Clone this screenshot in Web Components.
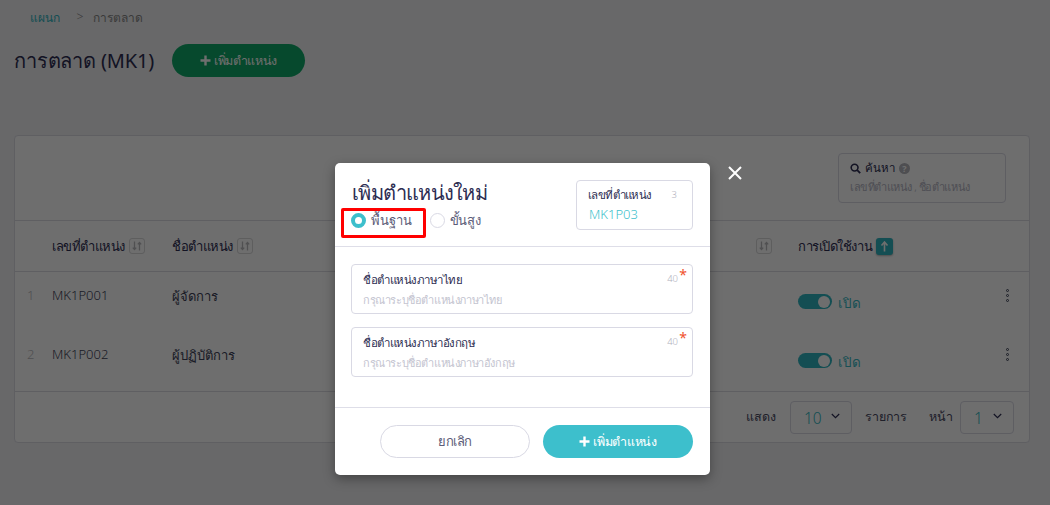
<!DOCTYPE html>
<html lang="th">
<head>
<meta charset="utf-8">
<title>การตลาด</title>
<style>
  html, body { margin: 0; height: 100%; }
  body { width: 1050px; height: 505px; overflow: hidden; background: #f0f0f3; color: #2d2d52; font-family: "Noto Sans", "Open Sans", sans-serif; font-weight: 300; }
</style>
</head>
<body>
<position-page></position-page>

<script>
const SORT_ICON = `<svg width="16" height="16" viewBox="0 0 16 16"><rect x=".5" y=".5" width="15" height="15" rx="2.5" fill="none" stroke="currentColor" opacity=".55"/><path d="M5.5 3.5v8M3.8 9.6l1.7 2 1.7-2M10.5 12.5v-8M8.8 6.4l1.7-2 1.7 2" fill="none" stroke="currentColor" stroke-width="1.3"/></svg>`;
const CHEVRON = `<svg width="9" height="6" viewBox="0 0 9 6"><path d="M.8 1l3.7 3.7L8.2 1" fill="none" stroke="currentColor" stroke-width="1.2"/></svg>`;

class SortTag extends HTMLElement {
  constructor() {
    super();
    this.attachShadow({ mode: 'open' }).innerHTML = `
      <style>
        :host { display: inline-flex; color: #b9b9bd; }
        :host([active]) { color: #fff; }
        .up { width: 17px; height: 17px; border-radius: 3px; background: #2fb5c0; display: flex; align-items: center; justify-content: center; box-shadow: 0 1px 2px rgba(0,0,0,.3); }
      </style>
      ${this.hasAttribute('active')
        ? `<span class="up"><svg width="9" height="11" viewBox="0 0 9 11"><path d="M4.5 10.5V2M1.5 4.5l3-3.5 3 3.5" fill="none" stroke="currentColor" stroke-width="1.6"/></svg></span>`
        : SORT_ICON}`;
  }
}

class ToggleSwitch extends HTMLElement {
  constructor() {
    super();
    this.attachShadow({ mode: 'open' }).innerHTML = `
      <style>
        :host { display: inline-flex; align-items: flex-start; gap: 6px; font-size: 13.5px; line-height: 18px; color: #39b8c4; }
        .track { width: 34px; height: 15px; border-radius: 8px; background: #2fb5c0; position: relative; }
        .knob { position: absolute; right: 2px; top: 1.5px; width: 12px; height: 12px; border-radius: 50%; background: #fff; }
      </style>
      <span class="track"><span class="knob"></span></span><span><slot></slot></span>`;
  }
}

class SelectBox extends HTMLElement {
  constructor() {
    super();
    this.attachShadow({ mode: 'open' }).innerHTML = `
      <style>
        :host { display: inline-flex; align-items: center; justify-content: space-between; box-sizing: border-box; height: 33px; padding: 2px 11px 0 13px; border: 1px solid #d9d9e4; border-radius: 4px; font-size: 15.5px; color: #2fb5c0; }
        svg { color: #2d2d52; margin-bottom: 4px; }
      </style>
      <slot></slot>${CHEVRON}`;
  }
}

class SearchBox extends HTMLElement {
  constructor() {
    super();
    this.attachShadow({ mode: 'open' }).innerHTML = `
      <style>
        :host { display: block; box-sizing: border-box; width: 168px; height: 50px; padding: 5px 11px; border: 1px solid #d9d9e4; border-radius: 4px; }
        .top { display: flex; align-items: center; gap: 4px; font-size: 11.5px; line-height: 18px; color: #2d2d52; }
        .hint { font-size: 11px; line-height: 20px; letter-spacing: -.45px; color: #b5b5c4; white-space: nowrap; }
        .q { width: 11px; height: 11px; border-radius: 50%; background: #b4b4bc; color: #fff; font-size: 9px; line-height: 11px; text-align: center; font-weight: 700; }
      </style>
      <div class="top">
        <svg width="11" height="11" viewBox="0 0 11 11"><circle cx="4.6" cy="4.6" r="3.4" fill="none" stroke="currentColor" stroke-width="1.6"/><path d="M7.2 7.2l3 3" stroke="currentColor" stroke-width="1.8"/></svg>
        <span>ค้นหา</span><span class="q">?</span>
      </div>
      <div class="hint">เลขที่ตำแหน่ง , ชื่อตำแหน่ง</div>`;
  }
}

class DataTable extends HTMLElement {
  constructor() {
    super();
    const rows = [['1', 'MK1P001', 'ผู้จัดการ'], ['2', 'MK1P002', 'ผู้ปฏิบัติการ']];
    this.attachShadow({ mode: 'open' }).innerHTML = `
      <style>
        :host { display: block; box-sizing: border-box; height: 308px; background: #fff; border: 1px solid #dcdce4; border-radius: 4px; }
        .tools { height: 85px; box-sizing: border-box; padding: 17px 23px 0 0; display: flex; justify-content: flex-end; border-bottom: 1px solid #dcdce4; }
        .row { display: grid; grid-template-columns: 37px 120px 518px 66px 42px 1fr 23px; align-items: center; }
        .head { height: 50px; border-bottom: 1px solid #dcdce4; font-size: 13px; letter-spacing: -.45px; color: #2d2d52; }
        .cell { display: flex; align-items: center; gap: 4px; white-space: nowrap; }
        .body-row { height: 59px; font-size: 13px; color: #3d4258; align-items: start; }
        .body-row > * { padding-top: 14px; }
        .rows { height: 119px; border-bottom: 1px solid #dcdce4; }
        .idx { color: #b9b9bd; padding-left: 12px; }
        .dots { width: 3px; display: flex; flex-direction: column; gap: 2px; }
        .dots i { width: 3px; height: 3px; box-sizing: border-box; border: 1px solid #3d4258; border-radius: 50%; }
        .foot { height: 50px; padding-right: 15px; display: flex; align-items: center; justify-content: flex-end; font-size: 12.5px; letter-spacing: -.1px; color: #4a4a63; }
        .foot span { white-space: nowrap; }
      </style>
      <div class="tools"><search-box></search-box></div>
      <div class="row head">
        <span></span>
        <span class="cell">เลขที่ตำแหน่ง <sort-tag></sort-tag></span>
        <span class="cell">ชื่อตำแหน่ง <sort-tag></sort-tag></span>
        <span></span>
        <span class="cell"><sort-tag></sort-tag></span>
        <span class="cell">การเปิดใช้งาน <sort-tag active></sort-tag></span>
        <span></span>
      </div>
      <div class="rows">
      ${rows.map(r => `
        <div class="row body-row">
          <span class="idx">${r[0]}</span><span>${r[1]}</span><span>${r[2]}</span><span></span><span></span>
          <span style="padding-top:22px"><toggle-switch>เปิด</toggle-switch></span>
          <span class="dots" style="padding-top:17px"><i></i><i></i><i></i></span>
        </div>`).join('')}
      </div>
      <div class="foot">
        <span>แสดง</span>
        <select-box style="width:62px;margin:0 13px 0 14px">10</select-box>
        <span>รายการ</span>
        <span style="margin-left:22px">หน้า</span>
        <select-box style="width:54px;margin-left:7px">1</select-box>
      </div>`;
  }
}

class RadioOption extends HTMLElement {
  constructor() {
    super();
    this.attachShadow({ mode: 'open' }).innerHTML = `
      <style>
        :host { display: inline-flex; align-items: center; gap: 5px; font-size: 13px; letter-spacing: -.1px; color: #5c5c78; }
        .dot { width: 15px; height: 15px; box-sizing: border-box; border-radius: 50%; border: 1px solid #d9d9e4; background: #fff; }
        :host([checked]) .dot { border: 4px solid #3dbfcc; }
      </style>
      <span class="dot"></span><slot></slot>`;
  }
}

class TextField extends HTMLElement {
  constructor() {
    super();
    this.attachShadow({ mode: 'open' }).innerHTML = `
      <style>
        :host { display: block; position: relative; box-sizing: border-box; height: 50px; padding: 6px 11px; border: 1px solid #d9d9e4; border-radius: 4px; background: #fff; }
        .label { font-size: 11.5px; line-height: 18px; letter-spacing: -.5px; color: #2d2d52; }
        .hint { font-size: 11px; line-height: 22px; letter-spacing: -.4px; color: #c4c4d0; }
        .count { position: absolute; right: 14px; top: 7px; font-size: 9.5px; color: #b0b0bc; }
        .req { position: absolute; right: 5px; top: 3px; font-size: 14px; line-height: 14px; font-weight: 400; color: #f0512d; }
      </style>
      <div class="label">${this.getAttribute('label')}</div>
      <div class="hint">${this.getAttribute('hint')}</div>
      <span class="count">40</span><span class="req">*</span>`;
  }
}

class PillButton extends HTMLElement {
  constructor() {
    super();
    this.attachShadow({ mode: 'open' }).innerHTML = `
      <style>
        :host { display: inline-flex; align-items: center; justify-content: center; gap: 3px; box-sizing: border-box; height: 33px; border-radius: 17px; font-size: 12.5px; letter-spacing: -.35px; white-space: nowrap; color: #fff; background: var(--pill-bg, #3dbfcc); }
        :host([outline]) { background: #fff; border: 1px solid #d9d9e4; color: #5c5c78; font-size: 13px; }
        svg { display: block; }
      </style>
      ${this.hasAttribute('outline') ? '' : `<svg width="11" height="11" viewBox="0 0 11 11"><path d="M5.5 .5v10M.5 5.5h10" stroke="currentColor" stroke-width="2.4"/></svg>`}
      <slot></slot>`;
  }
}

class PositionDialog extends HTMLElement {
  constructor() {
    super();
    this.attachShadow({ mode: 'open' }).innerHTML = `
      <style>
        :host { display: block; position: absolute; left: 335px; top: 163px; width: 375px; height: 312px; box-sizing: border-box; background: #fff; border-radius: 5px; box-shadow: 0 4px 12px rgba(0,0,0,.35); color: #2d2d52; }
        header { position: relative; height: 84px; box-sizing: border-box; padding: 16px 17px 0; display: flex; justify-content: space-between; border-bottom: 1px solid #dedee8; }
        h2 { margin: 0; font-size: 20px; line-height: 28px; letter-spacing: -.75px; font-weight: 400; }
        .mode { display: flex; align-items: center; gap: 4px; margin: 3px 0 0 -1px; }
        .mark { position: absolute; left: 6px; top: 45px; width: 85px; height: 30px; box-sizing: border-box; border: 3px solid #f00; border-radius: 2px; }
        .code { box-sizing: border-box; width: 117px; height: 50px; margin: 1px 0 0; padding: 5px 11px; border: 1px solid #d9d9e4; border-radius: 4px; position: relative; }
        .code .t { font-size: 11.5px; line-height: 18px; letter-spacing: -.6px; }
        .code .v { font-size: 13px; line-height: 20px; padding-left: 1px; color: #3dbfcc; }
        .code .n { position: absolute; right: 15px; top: 7px; font-size: 9.5px; color: #b0b0bc; }
        .fields { height: 161px; box-sizing: border-box; padding: 17px 17px 0 16px; display: flex; flex-direction: column; gap: 13px; border-bottom: 1px solid #dedee8; }
        footer { display: flex; justify-content: flex-end; gap: 13px; padding: 17px 17px 0; }
        .close { position: absolute; left: 392px; top: 2px; }
      </style>
      <header>
        <div>
          <h2>เพิ่มตำแหน่งใหม่</h2>
          <div class="mode">
            <radio-option checked>พื้นฐาน</radio-option>
            <radio-option style="margin-left:14px">ขั้นสูง</radio-option>
          </div>
        </div>
        <div class="code"><div class="t">เลขที่ตำแหน่ง</div><div class="v">MK1P03</div><span class="n">3</span></div>
        <span class="mark"></span>
      </header>
      <div class="fields">
        <text-field label="ชื่อตำแหน่งภาษาไทย" hint="กรุณาระบุชื่อตำแหน่งภาษาไทย"></text-field>
        <text-field label="ชื่อตำแหน่งภาษาอังกฤษ" hint="กรุณาระบุชื่อตำแหน่งภาษาอังกฤษ"></text-field>
      </div>
      <footer>
        <pill-button outline style="width:150px">ยกเลิก</pill-button>
        <pill-button style="width:150px">เพิ่มตำแหน่ง</pill-button>
      </footer>
      <svg class="close" width="16" height="16" viewBox="0 0 16 16"><path d="M2 2l12 12M14 2L2 14" stroke="#fff" stroke-width="2"/></svg>`;
  }
}

class PositionPage extends HTMLElement {
  constructor() {
    super();
    this.attachShadow({ mode: 'open' }).innerHTML = `
      <style>
        :host { display: block; width: 1050px; height: 505px; position: relative; overflow: hidden; }
        .crumbs { height: 17px; padding: 8px 0 0 30px; display: flex; font-size: 12px; letter-spacing: -.1px; color: #888; }
        .crumbs b { font-weight: 400; color: #2fb5c0; }
        .crumbs .sep { margin: 0 10px 0 17px; }
        .title { display: flex; align-items: center; gap: 17px; margin: 19px 0 58px 14px; height: 33px; }
        h1 { margin: 0; width: 141px; font-size: 20px; letter-spacing: -.15px; font-weight: 400; color: #2d2d52; white-space: nowrap; }
        data-table { margin: 0 20px 0 14px; }
        .scrim { position: absolute; inset: 0; background: rgba(0,0,0,.57); }
      </style>
      <nav class="crumbs"><b>แผนก</b><span class="sep">&gt;</span><span>การตลาด</span></nav>
      <div class="title">
        <h1>การตลาด (MK1)</h1>
        <pill-button style="width:133px;--pill-bg:#0fa968">เพิ่มตำแหน่ง</pill-button>
      </div>
      <data-table></data-table>
      <div class="scrim"></div>
      <position-dialog></position-dialog>`;
  }
}

customElements.define('sort-tag', SortTag);
customElements.define('toggle-switch', ToggleSwitch);
customElements.define('select-box', SelectBox);
customElements.define('search-box', SearchBox);
customElements.define('data-table', DataTable);
customElements.define('radio-option', RadioOption);
customElements.define('text-field', TextField);
customElements.define('pill-button', PillButton);
customElements.define('position-dialog', PositionDialog);
customElements.define('position-page', PositionPage);
</script>
</body>
</html>
